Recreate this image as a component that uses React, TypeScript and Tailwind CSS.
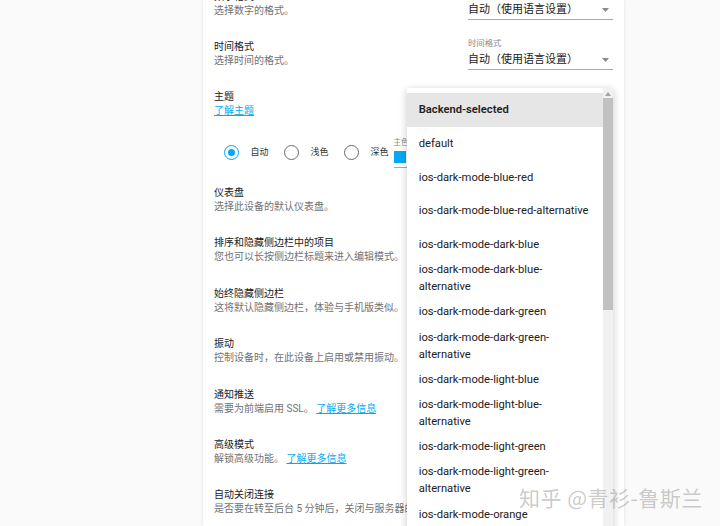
import React from "react";

const font = "font-['Roboto','Noto_Sans_CJK_SC',sans-serif]";

function Row({
  title,
  desc,
  right,
}: {
  title: string;
  desc: React.ReactNode;
  right?: React.ReactNode;
}) {
  return (
    <div className="flex h-[50.4px] items-center justify-between">
      <div className="flex flex-col whitespace-nowrap">
        <div className="text-[10px] leading-[14px] text-[#212121]">{title}</div>
        <div className="text-[10px] leading-[14px] text-[#727272]">{desc}</div>
      </div>
      {right}
    </div>
  );
}

function Select({ label }: { label: string }) {
  return (
    <div className="flex w-[145px] flex-col">
      <div className="h-[12px] text-[8.4px] leading-[12px] text-[#8a8a8a]">{label}</div>
      <div className="mt-[2px] flex h-[19px] items-center justify-between border-b border-[#a8a8a8]">
        <span className="text-[11px] leading-[16px] text-[#212121]">自动（使用语言设置）</span>
        <svg width="7" height="4" viewBox="0 0 7 4" className="mr-[4px]">
          <path d="M0 0 L7 0 L3.5 4 Z" fill="#8a8a8a" />
        </svg>
      </div>
    </div>
  );
}

function Radio({ checked, label }: { checked?: boolean; label: string }) {
  return (
    <div className="flex items-center">
      <div
        className={
          checked
            ? "flex h-[15px] w-[15px] items-center justify-center rounded-full border-[1.5px] border-[#03a9f4]"
            : "h-[15px] w-[15px] rounded-full border-[1.5px] border-[#6b6b6b]"
        }
      >
        {checked && <div className="h-[7px] w-[7px] rounded-full bg-[#03a9f4]" />}
      </div>
      <span className="ml-[11.5px] text-[9px] leading-[12px] text-[#333]">{label}</span>
    </div>
  );
}

const items: { t: string[]; sel?: boolean }[] = [
  { t: ["Backend-selected"], sel: true },
  { t: ["default"] },
  { t: ["ios-dark-mode-blue-red"] },
  { t: ["ios-dark-mode-blue-red-alternative"] },
  { t: ["ios-dark-mode-dark-blue"] },
  { t: ["ios-dark-mode-dark-blue-", "alternative"] },
  { t: ["ios-dark-mode-dark-green"] },
  { t: ["ios-dark-mode-dark-green-", "alternative"] },
  { t: ["ios-dark-mode-light-blue"] },
  { t: ["ios-dark-mode-light-blue-", "alternative"] },
  { t: ["ios-dark-mode-light-green"] },
  { t: ["ios-dark-mode-light-green-", "alternative"] },
  { t: ["ios-dark-mode-orange"] },
  { t: ["ios-dark-mode-orange-", "alternative"] },
];

function Link({ children }: { children: React.ReactNode }) {
  return <span className="text-[#03a9f4] underline underline-offset-[1px]">{children}</span>;
}

export default function App() {
  return (
    <div className={`relative h-[526px] w-[720px] overflow-hidden bg-[#fafafa] ${font}`}>
      {/* Card */}
      <div className="ml-[203px] h-[526px] w-[421px] overflow-hidden bg-white shadow-[0_0_3px_rgba(0,0,0,0.12)]">
        <div className="mt-[-21.6px] px-[11px]">
          <Row title="数字格式" desc="选择数字的格式。" right={<Select label="数字格式" />} />
          <Row title="时间格式" desc="选择时间的格式。" right={<Select label="时间格式" />} />
          <Row title="主题" desc={<Link>了解主题</Link>} />
          <div className="flex h-[45.2px] items-center pl-[10px]">
            <Radio checked label="自动" />
            <div className="ml-[15.5px]">
              <Radio label="浅色" />
            </div>
            <div className="ml-[15.5px]">
              <Radio label="深色" />
            </div>
            <div className="ml-[5px] mt-[1px] flex w-[40px] flex-col">
              <div className="text-[7.5px] leading-[9px] text-[#8a8a8a]">主色</div>
              <div className="mt-[4px] h-[12px] w-[12px] bg-[#03a9f4]" />
              <div className="mt-[4px] h-[1px] w-full bg-[#a8a8a8]" />
            </div>
          </div>
          <Row title="仪表盘" desc="选择此设备的默认仪表盘。" />
          <Row title="排序和隐藏侧边栏中的项目" desc="您也可以长按侧边栏标题来进入编辑模式。" />
          <Row title="始终隐藏侧边栏" desc="这将默认隐藏侧边栏，体验与手机版类似。" />
          <Row title="振动" desc="控制设备时，在此设备上启用或禁用振动。" />
          <Row
            title="通知推送"
            desc={
              <>
                需要为前端启用 SSL。 <Link>了解更多信息</Link>
              </>
            }
          />
          <Row
            title="高级模式"
            desc={
              <>
                解锁高级功能。 <Link>了解更多信息</Link>
              </>
            }
          />
          <Row title="自动关闭连接" desc="是否要在转至后台 5 分钟后，关闭与服务器的连接？" />
        </div>
      </div>

      {/* Dropdown menu */}
      <div className="absolute left-[407px] top-[88px] flex h-[460px] w-[206px] overflow-hidden bg-white shadow-[0_2px_8px_rgba(0,0,0,0.22)]">
        <div className="flex-1 pt-[5px]">
          {items.map((it, i) => (
            <div
              key={i}
              className={`flex h-[33.7px] items-center pl-[11.7px] text-[11.2px] leading-[17px] text-[#212121] ${
                it.sel ? "bg-[#e6e6e6] font-semibold" : ""
              }`}
            >
              <div className="whitespace-nowrap">
                {it.t.map((l, j) => (
                  <div key={j}>{l}</div>
                ))}
              </div>
            </div>
          ))}
        </div>
        <div className="relative w-[10px] bg-[#f1f1f1]">
          <svg width="6" height="4" viewBox="0 0 6 4" className="absolute left-[2px] top-[4px]">
            <path d="M0 4 L6 4 L3 0 Z" fill="#a3a3a3" />
          </svg>
          <div className="absolute left-0 top-[10px] h-[212px] w-[10px] bg-[#c1c1c1]" />
        </div>
      </div>

      {/* Watermark */}
      <div className="absolute left-[519px] top-[484px] whitespace-nowrap text-[21px] leading-[26px] tracking-[0.5px] text-[rgba(140,140,140,0.45)] font-['Noto_Sans_CJK_SC',sans-serif]">
        知乎 @青衫-鲁斯兰
      </div>
    </div>
  );
}
